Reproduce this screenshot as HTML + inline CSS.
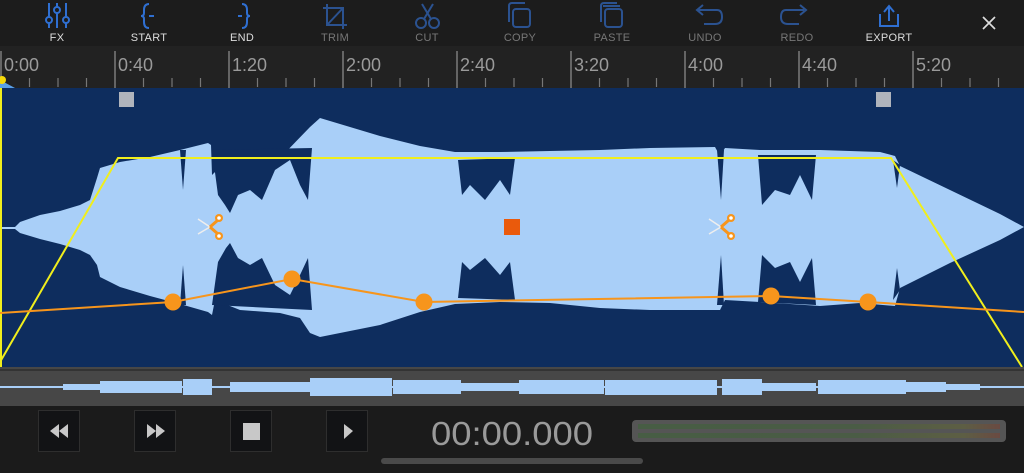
<!DOCTYPE html>
<html><head><meta charset="utf-8"><style>
body{margin:0;width:1024px;height:473px;overflow:hidden;background:#1b1b1b;font-family:"Liberation Sans",sans-serif;position:relative}
.tb{position:absolute;left:0;top:0;width:1024px;height:46px;background:#1c1c1c}
.lab{position:absolute;top:32px;font-size:11px;width:80px;text-align:center;letter-spacing:0.3px}
.btn{position:absolute;top:410px;width:42px;height:42px;background:#121315;border:1px solid #2e2e2e;box-sizing:border-box}
</style></head><body>
<div class="tb"></div>
<svg width="1024" height="473" style="position:absolute;left:0;top:0">
<g fill="none" stroke="#2f6fd1" stroke-width="2">
 <line x1="49" y1="3" x2="49" y2="28"/><line x1="57" y1="3" x2="57" y2="28"/><line x1="66" y1="3" x2="66" y2="28"/>
 <circle cx="49" cy="20" r="3" fill="#1c1c1c"/><circle cx="57" cy="10" r="3" fill="#1c1c1c"/><circle cx="66" cy="20" r="3" fill="#1c1c1c"/>
 <path d="M149 4 Q144 4 144 10 L144 13 Q144 16 141 16 Q144 16 144 19 L144 22 Q144 28 149 28"/><line x1="149" y1="16" x2="154" y2="16"/>
 <path d="M242 4 Q247 4 247 10 L247 13 Q247 16 250 16 Q247 16 247 19 L247 22 Q247 28 242 28"/><line x1="238" y1="16" x2="242" y2="16"/>
 <path d="M884 12 L889 6 L894 12 M889 6 L889 21 M880 14 L880 26 L898 26 L898 14"/>
</g>
<g fill="none" stroke="#2b5290" stroke-width="2">
 <path d="M327 4 L327 25 L347 25 M323 8 L343 8 L343 29 M327 25 L343 8"/>
 <circle cx="421" cy="23" r="5"/><circle cx="434" cy="23" r="5"/><path d="M424 19 L433 4 M431 19 L422 4"/>
 <rect x="513" y="9" width="17" height="18" rx="3"/><path d="M509 22 L509 6 Q509 3 512 3 L525 3"/>
 <rect x="605" y="9" width="17" height="18" rx="3"/><path d="M601 22 L601 6 Q601 3 604 3 L617 3"/><path d="M603 6 L620 6"/>
 <path d="M698 10 L717 10 Q722 10 722 17 Q722 24 715 24 L704 24 M703 5 L697 10 L703 15"/>
 <path d="M804 10 L786 10 Q781 10 781 17 Q781 24 788 24 L799 24 M800 5 L806 10 L800 15"/>
</g>
<path d="M983 17 L995 29 M995 17 L983 29" stroke="#ddd" stroke-width="1.7"/>
<rect x="0" y="46" width="1024" height="42" fill="#222"/>
<g stroke="#8a8a8a" stroke-width="1.3">
 <line x1="1" y1="51" x2="1" y2="88"/><line x1="115" y1="51" x2="115" y2="88"/><line x1="229" y1="51" x2="229" y2="88"/><line x1="343" y1="51" x2="343" y2="88"/><line x1="457" y1="51" x2="457" y2="88"/><line x1="571" y1="51" x2="571" y2="88"/><line x1="685" y1="51" x2="685" y2="88"/><line x1="799" y1="51" x2="799" y2="88"/><line x1="913" y1="51" x2="913" y2="88"/>
</g>
<g stroke="#777" stroke-width="1.2">
 <path d="M29.5 78V87M58 78V87M86.5 78V87M143.5 78V87M172 78V87M200.5 78V87M257.5 78V87M286 78V87M314.5 78V87M371.5 78V87M400 78V87M428.5 78V87M485.5 78V87M514 78V87M542.5 78V87M599.5 78V87M628 78V87M656.5 78V87M713.5 78V87M742 78V87M770.5 78V87M827.5 78V87M856 78V87M884.5 78V87M941.5 78V87M970 78V87M998.5 78V87"/>
</g>
<g fill="#9a9a9a" font-size="18" font-family="Liberation Sans">
 <text x="4" y="71">0:00</text><text x="118" y="71">0:40</text><text x="232" y="71">1:20</text><text x="346" y="71">2:00</text><text x="460" y="71">2:40</text><text x="574" y="71">3:20</text><text x="688" y="71">4:00</text><text x="802" y="71">4:40</text><text x="916" y="71">5:20</text>
</g>
<path d="M0 80 L15 88 L0 88Z" fill="#5aa0e8"/>
<circle cx="2" cy="80" r="4" fill="#f5d90a"/>
<rect x="0" y="88" width="1024" height="279" fill="#0e2d5e"/>
<path fill="#a9cff8" d="M0 227 L15 227 L20 222 L40 215 L60 211 L80 205 L90 200 L97 178 L100 168 L120 162 L150 157 L180 150 L208 143 L211 145 L212 175 L215 172 L240 163 L280 158 L310 127 L320 118 L340 124 L380 136 L420 146 L455 152 L500 152 L550 151 L600 150 L650 148 L715 147 L720 156 L725 148 L760 150 L820 150 L880 152 L895 156 L900 166 L950 190 L1000 214 L1024 227 L1000 240 L950 263 L900 288 L895 306 L860 303 L820 306 L760 302 L725 300 L720 310 L715 310 L650 310 L600 308 L550 303 L500 302 L455 304 L420 312 L380 325 L340 333 L320 337 L310 333 L300 318 L280 313 L240 310 L215 300 L212 315 L208 312 L180 304 L150 296 L120 287 L100 277 L97 265 L90 255 L80 250 L60 244 L40 239 L20 233 L15 229 L0 229Z"/>
<g fill="#0e2d5e">
 <path d="M212 150 L218 195 L225 205 L230 213 L238 195 L250 190 L262 200 L275 170 L290 160 L300 185 L308 200 L312 148Z"/>
 <path d="M212 305 L218 262 L226 248 L230 243 L238 258 L250 265 L262 258 L275 285 L290 295 L300 275 L308 258 L312 310Z"/>
 <path d="M458 160 L462 195 L470 185 L485 200 L500 180 L510 195 L515 158Z"/>
 <path d="M458 298 L462 262 L470 270 L485 258 L500 275 L510 262 L515 300Z"/>
 <path d="M758 155 L762 205 L775 190 L790 195 L800 175 L812 200 L816 155Z"/>
 <path d="M758 302 L762 255 L775 268 L790 262 L800 282 L812 258 L816 305Z"/>
 <path d="M717 150 L721 200 L724 150Z"/><path d="M717 305 L721 255 L724 305Z"/>
 <path d="M893 160 L897 188 L900 165Z"/><path d="M893 300 L897 268 L900 290Z"/>
 <path d="M180 150 L183 190 L186 150Z"/><path d="M180 305 L183 265 L186 305Z"/>
</g>
<rect x="119" y="92" width="15" height="15" fill="#b0b4bc"/>
<rect x="876" y="92" width="15" height="15" fill="#b0b4bc"/>
<polyline points="0,362 118,158 891,158 1022,367" fill="none" stroke="#f0ee1c" stroke-width="2"/>
<line x1="1" y1="88" x2="1" y2="367" stroke="#f0ee1c" stroke-width="2"/>
<polyline points="0,313 173,302 292,279 424,302 771,296 868,302 1024,312" fill="none" stroke="#f7951c" stroke-width="2"/>
<g fill="#f7951c"><circle cx="173" cy="302" r="8.5"/><circle cx="292" cy="279" r="8.5"/><circle cx="424" cy="302" r="8.5"/><circle cx="771" cy="296" r="8.5"/><circle cx="868" cy="302" r="8.5"/></g>
<rect x="504" y="219" width="16" height="16" fill="#ea5a0c"/>
<g>
 <path d="M198 219 L210 227 L198 234" stroke="#eee" stroke-width="1.5" fill="none"/>
 <path d="M210 227 L218 220 M210 227 L218 234" stroke="#f7951c" stroke-width="3"/>
 <circle cx="219" cy="218" r="4" fill="#f7951c"/><circle cx="219" cy="218" r="1.8" fill="#fff"/>
 <circle cx="219" cy="236" r="4" fill="#f7951c"/><circle cx="219" cy="236" r="1.8" fill="#fff"/>
</g>
<g>
 <path d="M709 219 L721 227 L709 234" stroke="#eee" stroke-width="1.5" fill="none"/>
 <path d="M721 227 L729 220 M721 227 L729 234" stroke="#f7951c" stroke-width="3"/>
 <circle cx="731" cy="218" r="4" fill="#f7951c"/><circle cx="731" cy="218" r="1.8" fill="#fff"/>
 <circle cx="731" cy="236" r="4" fill="#f7951c"/><circle cx="731" cy="236" r="1.8" fill="#fff"/>
</g>
<rect x="0" y="367" width="1024" height="39" fill="#474747"/>
<rect x="0" y="369" width="1024" height="2" fill="#333"/>
<rect x="0" y="386" width="1024" height="2" fill="#a9cff8"/>
<g fill="#a9cff8">
 <rect x="63" y="384" width="37" height="6"/><rect x="100" y="381" width="82" height="12"/><rect x="183" y="379" width="29" height="16"/>
 <rect x="230" y="382" width="80" height="10"/><rect x="310" y="378" width="82" height="18"/><rect x="393" y="380" width="68" height="14"/>
 <rect x="461" y="383" width="58" height="8"/><rect x="519" y="380" width="85" height="14"/><rect x="605" y="380" width="112" height="15"/>
 <rect x="722" y="379" width="40" height="16"/><rect x="762" y="383" width="54" height="8"/><rect x="818" y="380" width="88" height="14"/>
 <rect x="906" y="382" width="40" height="10"/><rect x="946" y="384" width="34" height="6"/>
</g>
<rect x="0" y="406" width="1024" height="67" fill="#1b1b1b"/>
<rect x="632" y="420" width="374" height="22" rx="4" fill="#555"/>
<defs><linearGradient id="m" x1="0" x2="1"><stop offset="0" stop-color="#475d44"/><stop offset="0.6" stop-color="#4a5c45"/><stop offset="0.9" stop-color="#5d5e44"/><stop offset="1" stop-color="#6a4a42"/></linearGradient></defs>
<rect x="638" y="424" width="362" height="5" fill="url(#m)"/>
<rect x="638" y="433" width="362" height="5" fill="url(#m)"/>
<rect x="381" y="458" width="262" height="6" rx="3" fill="#4a4a4a"/>
</svg>
<div class="lab" style="left:17px;color:#ddd">FX</div>
<div class="lab" style="left:109px;color:#ddd">START</div>
<div class="lab" style="left:202px;color:#ddd">END</div>
<div class="lab" style="left:295px;color:#777">TRIM</div>
<div class="lab" style="left:387px;color:#777">CUT</div>
<div class="lab" style="left:480px;color:#777">COPY</div>
<div class="lab" style="left:572px;color:#777">PASTE</div>
<div class="lab" style="left:665px;color:#777">UNDO</div>
<div class="lab" style="left:757px;color:#777">REDO</div>
<div class="lab" style="left:849px;color:#ddd">EXPORT</div>
<div class="btn" style="left:38px"></div><div class="btn" style="left:134px"></div><div class="btn" style="left:230px"></div><div class="btn" style="left:326px"></div>
<svg width="1024" height="473" style="position:absolute;left:0;top:0">
<g fill="#c8c8c8">
 <path d="M59 424 L50 431 L59 438Z M68 424 L59 431 L68 438Z"/>
 <path d="M147 424 L156 431 L147 438Z M156 424 L165 431 L156 438Z"/>
 <rect x="243" y="423" width="17" height="17"/>
 <path d="M344 424 L353 431 L344 439Z"/>
</g>
<text x="512" y="445" text-anchor="middle" fill="#9a9a9a" font-size="33" font-family="Liberation Sans" textLength="162" lengthAdjust="spacingAndGlyphs">00:00.000</text>
</svg>
</body></html>
